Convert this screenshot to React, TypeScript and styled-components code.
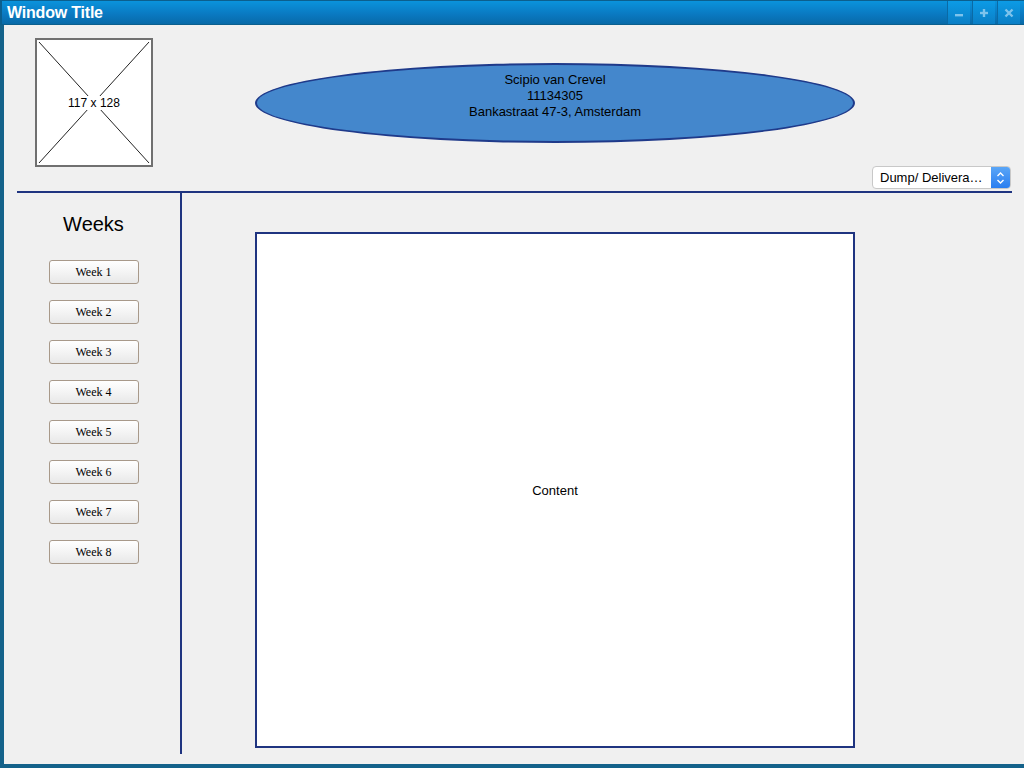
import React from "react";
import styled, { createGlobalStyle } from "styled-components";

const GlobalStyle = createGlobalStyle`
  html, body {
    margin: 0;
    padding: 0;
    width: 1024px;
    height: 768px;
    overflow: hidden;
    background: #f0f0f0;
    font-family: "Liberation Sans", Arial, sans-serif;
  }
`;

const Window = styled.div`
  width: 1024px;
  height: 768px;
  display: flex;
  flex-direction: column;
  box-sizing: border-box;
`;

const TitleBar = styled.div`
  height: 25px;
  flex: none;
  box-sizing: border-box;
  display: flex;
  align-items: center;
  background: linear-gradient(#0a93dc, #0a78c0 60%, #086aa8);
  border-top: 1px solid #0b5f8e;
  border-left: 2px solid #0b5f8e;
  border-bottom: 1px solid #0b5f8e;
  padding-left: 5px;
`;

const TitleText = styled.span`
  color: #ffffff;
  font-size: 16px;
  font-weight: bold;
  letter-spacing: -0.2px;
`;

const TitleButtons = styled.div`
  margin-left: auto;
  display: flex;
  height: 100%;
  gap: 2px;
  padding-right: 4px;
`;

const TitleButton = styled.div`
  width: 22px;
  height: 100%;
  display: flex;
  align-items: center;
  justify-content: center;
  background: linear-gradient(#0c9be6, #0b7fc6);
  border-left: 1px solid #0a6aa5;
`;

const Body = styled.div`
  flex: 1;
  display: flex;
  flex-direction: column;
  border-left: 4px solid #14628a;
  border-bottom: 4px solid #14628a;
  background: #f0f0f0;
`;

const Header = styled.div`
  height: 166px;
  flex: none;
  display: flex;
  align-items: flex-start;
`;

const Placeholder = styled.div`
  width: 118px;
  height: 129px;
  margin: 13px 0 0 31px;
  box-sizing: border-box;
  border: 2px solid #707070;
  background: #fff;
  position: relative;
  display: flex;
  align-items: center;
  justify-content: center;
  font-size: 12px;
  color: #000;
`;

const PlaceholderLines = styled.svg`
  position: absolute;
  inset: 0;
  width: 100%;
  height: 100%;
`;

const PlaceholderLabel = styled.span`
  position: relative;
  background: #fff;
  padding: 0 1px;
`;

const Ellipse = styled.div`
  width: 600px;
  height: 80px;
  margin: 38px 0 0 102px;
  box-sizing: border-box;
  border: 2px solid #1f3a8a;
  border-radius: 50%;
  background: #4487cc;
  text-align: center;
  padding-top: 7px;
  font-size: 13px;
  line-height: 16px;
  color: #000;
`;

const Select = styled.div`
  margin: 0 13px 2px auto;
  align-self: flex-end;
  width: 139px;
  height: 23px;
  box-sizing: border-box;
  border: 1px solid #c8c8c8;
  border-radius: 4px;
  background: #fff;
  display: flex;
  align-items: center;
  overflow: hidden;
`;

const SelectText = styled.span`
  flex: 1;
  padding-left: 7px;
  font-size: 13px;
  color: #000;
  white-space: nowrap;
`;

const Stepper = styled.div`
  width: 19px;
  height: 100%;
  background: linear-gradient(#5aa6f7, #2a7ef0);
  display: flex;
  align-items: center;
  justify-content: center;
`;

const Divider = styled.div`
  height: 2px;
  flex: none;
  margin: 0 12px 0 13px;
  background: #1f3480;
`;

const Main = styled.div`
  flex: 1;
  display: flex;
`;

const Sidebar = styled.div`
  width: 173px;
  margin-bottom: 10px;
  border-right: 2px solid #1f3480;
  display: flex;
  flex-direction: column;
  align-items: center;
  padding: 19px 0 0 3px;
`;

const SidebarTitle = styled.div`
  font-size: 20px;
  line-height: 24px;
  color: #000;
  margin-bottom: 24px;
`;

const WeekList = styled.div`
  display: flex;
  flex-direction: column;
  gap: 16px;
`;

const WeekButton = styled.button`
  width: 90px;
  height: 24px;
  box-sizing: border-box;
  border: 1px solid #a8998a;
  border-radius: 3px;
  background: linear-gradient(#ffffff, #f4f4f4 50%, #e8e8e8);
  font-family: "Liberation Serif", "Times New Roman", serif;
  font-size: 12px;
  color: #000;
  padding: 0;
  cursor: pointer;
`;

const ContentArea = styled.div`
  flex: 1;
  padding: 39px 0 0 73px;
`;

const ContentBox = styled.div`
  width: 600px;
  height: 516px;
  box-sizing: border-box;
  border: 2px solid #1f3480;
  background: #fff;
  display: flex;
  align-items: center;
  justify-content: center;
  font-size: 13px;
  color: #000;
`;

const weeks = [1, 2, 3, 4, 5, 6, 7, 8];

export default function App() {
  return (
    <>
      <GlobalStyle />
      <Window>
        <TitleBar>
          <TitleText>Window Title</TitleText>
          <TitleButtons>
            <TitleButton>
              <svg width="10" height="10" viewBox="0 0 10 10">
                <rect x="1" y="6" width="8" height="2.4" fill="#7ec3ec" />
              </svg>
            </TitleButton>
            <TitleButton>
              <svg width="10" height="10" viewBox="0 0 10 10">
                <rect x="1" y="3.8" width="8" height="2.4" fill="#7ec3ec" />
                <rect x="3.8" y="1" width="2.4" height="8" fill="#7ec3ec" />
              </svg>
            </TitleButton>
            <TitleButton>
              <svg width="10" height="10" viewBox="0 0 10 10">
                <path d="M1.5 1.5 L8.5 8.5 M8.5 1.5 L1.5 8.5" stroke="#7ec3ec" strokeWidth="2.4" />
              </svg>
            </TitleButton>
          </TitleButtons>
        </TitleBar>
        <Body>
          <Header>
            <Placeholder>
              <PlaceholderLines viewBox="0 0 114 125" preserveAspectRatio="none">
                <line x1="2" y1="2" x2="112" y2="123" stroke="#222" strokeWidth="1" />
                <line x1="112" y1="2" x2="2" y2="123" stroke="#222" strokeWidth="1" />
              </PlaceholderLines>
              <PlaceholderLabel>117 x 128</PlaceholderLabel>
            </Placeholder>
            <Ellipse>
              Scipio van Crevel
              <br />
              11134305
              <br />
              Bankastraat 47-3, Amsterdam
            </Ellipse>
            <Select>
              <SelectText>Dump/ Delivera…</SelectText>
              <Stepper>
                <svg width="9" height="14" viewBox="0 0 9 14">
                  <path d="M1.5 5 L4.5 2 L7.5 5 M1.5 9 L4.5 12 L7.5 9" fill="none" stroke="#fff" strokeWidth="1.4" />
                </svg>
              </Stepper>
            </Select>
          </Header>
          <Divider />
          <Main>
            <Sidebar>
              <SidebarTitle>Weeks</SidebarTitle>
              <WeekList>
                {weeks.map((w) => (
                  <WeekButton key={w}>Week {w}</WeekButton>
                ))}
              </WeekList>
            </Sidebar>
            <ContentArea>
              <ContentBox>Content</ContentBox>
            </ContentArea>
          </Main>
        </Body>
      </Window>
    </>
  );
}
